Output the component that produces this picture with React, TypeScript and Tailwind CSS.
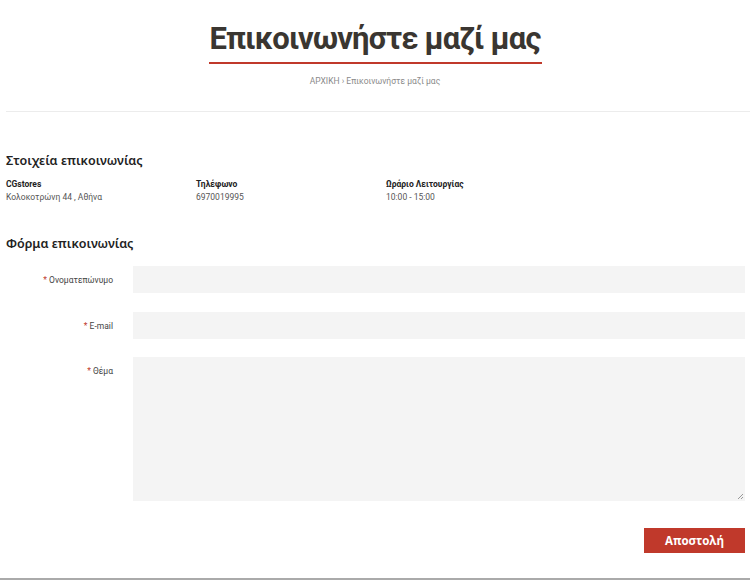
import React from "react";

export default function App() {
  return (
    <div className="w-[750px] h-[580px] bg-white relative overflow-hidden" style={{ fontFamily: "Roboto, 'Noto Sans', sans-serif" }}>
      <div className="flex flex-col items-center pt-[18px]">
        <h1 className="text-[31px] leading-[42px] font-bold text-[#3a3631] tracking-[-0.85px]" style={{ fontFamily: "Roboto, sans-serif" }}>
          Επικοινωνήστε μαζί μας
        </h1>
        <div className="w-[333px] h-[2px] bg-[#c0392b] mt-[2px]" />
        <div className="mt-[11px] text-[8.5px] text-[#8a8a8a]">ΑΡΧΙΚΗ › Επικοινωνήστε μαζί μας</div>
      </div>
      <div className="ml-[6px] mt-[23px] h-px bg-[#ececec]" />

      <div className="pl-[6px] pr-[5px]">
        <h2 className="mt-[40px] text-[12.5px] font-semibold text-[#222]" style={{ fontFamily: "'Noto Sans', sans-serif" }}>
          Στοιχεία επικοινωνίας
        </h2>
        <div className="mt-[7px] flex text-[8.5px] leading-[13px]">
          <div className="w-[190px]">
            <div className="font-bold text-[#222]">CGstores</div>
            <div className="text-[#555]">Κολοκοτρώνη 44 , Αθήνα</div>
          </div>
          <div className="w-[190px]">
            <div className="font-bold text-[#222]">Τηλέφωνο</div>
            <div className="text-[#555]">6970019995</div>
          </div>
          <div>
            <div className="font-bold text-[#222]">Ωράριο Λειτουργίας</div>
            <div className="text-[#555]">10:00 - 15:00</div>
          </div>
        </div>

        <h2 className="mt-[31px] text-[12.5px] font-semibold text-[#222]" style={{ fontFamily: "'Noto Sans', sans-serif" }}>
          Φόρμα επικοινωνίας
        </h2>

        <div className="mt-[13px] flex flex-col">
          <div className="flex">
            <label className="w-[107px] text-right text-[8.5px] text-[#444] pt-[8px]">
              <span className="text-[#c0392b]">*</span> Ονοματεπώνυμο
            </label>
            <div className="ml-[20px] flex-1 h-[27px] bg-[#f4f4f4]" />
          </div>
          <div className="flex mt-[19px]">
            <label className="w-[107px] text-right text-[8.5px] text-[#444] pt-[8px]">
              <span className="text-[#c0392b]">*</span> E-mail
            </label>
            <div className="ml-[20px] flex-1 h-[27px] bg-[#f4f4f4]" />
          </div>
          <div className="flex mt-[18px]">
            <label className="w-[107px] text-right text-[8.5px] text-[#444] pt-[8px]">
              <span className="text-[#c0392b]">*</span> Θέμα
            </label>
            <div className="ml-[20px] flex-1 h-[144px] bg-[#f4f4f4] relative">
              <svg className="absolute right-[1px] bottom-[1px]" width="7" height="7" viewBox="0 0 7 7">
                <path d="M6 1 L1 6 M6 4 L4 6" stroke="#999" strokeWidth="1" />
              </svg>
            </div>
          </div>
        </div>

        <div className="flex justify-end mt-[27px]">
          <button className="w-[101px] h-[25px] bg-[#c0392b] text-white text-[11.5px] font-bold" style={{ fontFamily: "'Open Sans', sans-serif" }}>
            Αποστολή
          </button>
        </div>
      </div>
      <div className="absolute left-0 right-0 bottom-0 h-[2px] bg-[#aaaaaa]" />
    </div>
  );
}
